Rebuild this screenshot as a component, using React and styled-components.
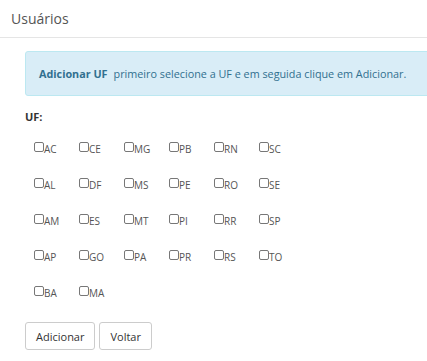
import React from "react";
import styled, { createGlobalStyle } from "styled-components";

const GlobalStyle = createGlobalStyle`
  body {
    margin: 0;
    background: #fff;
    font-family: "Open Sans", "Liberation Sans", sans-serif;
    color: #333;
    overflow: hidden;
  }
`;

const Header = styled.div`
  height: 37px;
  padding: 0 11px;
  display: flex;
  align-items: center;
  font-size: 14px;
  color: #555;
  border-bottom: 1px solid #e5e5e5;
`;

const Body = styled.div`
  padding: 13px 0 0 25px;
`;

const Alert = styled.div`
  width: calc(100% + 20px);
  box-sizing: border-box;
  height: 45px;
  display: flex;
  align-items: center;
  padding-left: 13px;
  background: #d9edf7;
  border: 1px solid #bce8f1;
  border-radius: 3px;
  color: #31708f;
  font-size: 10.8px;

  strong {
    font-weight: 700;
    margin-right: 6px;
  }
`;

const Label = styled.div`
  margin-top: 13px;
  font-size: 11px;
  font-weight: 700;
  color: #333;
`;

const Grid = styled.div`
  display: grid;
  grid-template-columns: repeat(6, 45px);
  grid-auto-rows: 36px;
  margin: 16px 0 0 9px;
`;

const Option = styled.label`
  display: flex;
  align-items: center;
  height: 18px;
  font-size: 10px;
  color: #555;
`;

const Box = styled.input`
  appearance: none;
  width: 10px;
  height: 10px;
  margin: 0;
  border: 1px solid #777;
  border-radius: 2px;
  box-sizing: border-box;
  background: #fff;
  position: relative;
  top: -2px;
`;

const Actions = styled.div`
  display: flex;
  gap: 4px;
  margin-top: 2px;
`;

const Button = styled.button`
  height: 28px;
  padding: 0 10px;
  font-family: inherit;
  font-size: 11px;
  color: #333;
  background: #fff;
  border: 1px solid #ccc;
  border-radius: 3px;
`;

const ufs = [
  "AC", "CE", "MG", "PB", "RN", "SC",
  "AL", "DF", "MS", "PE", "RO", "SE",
  "AM", "ES", "MT", "PI", "RR", "SP",
  "AP", "GO", "PA", "PR", "RS", "TO",
  "BA", "MA",
];

export default function App() {
  return (
    <>
      <GlobalStyle />
      <Header>Usuários</Header>
      <Body>
        <Alert>
          <strong>Adicionar UF</strong> primeiro selecione a UF e em seguida clique em Adicionar.
        </Alert>
        <Label>UF:</Label>
        <Grid>
          {ufs.map((uf) => (
            <Option key={uf}>
              <Box type="checkbox" />
              {uf}
            </Option>
          ))}
        </Grid>
        <Actions>
          <Button>Adicionar</Button>
          <Button>Voltar</Button>
        </Actions>
      </Body>
    </>
  );
}
